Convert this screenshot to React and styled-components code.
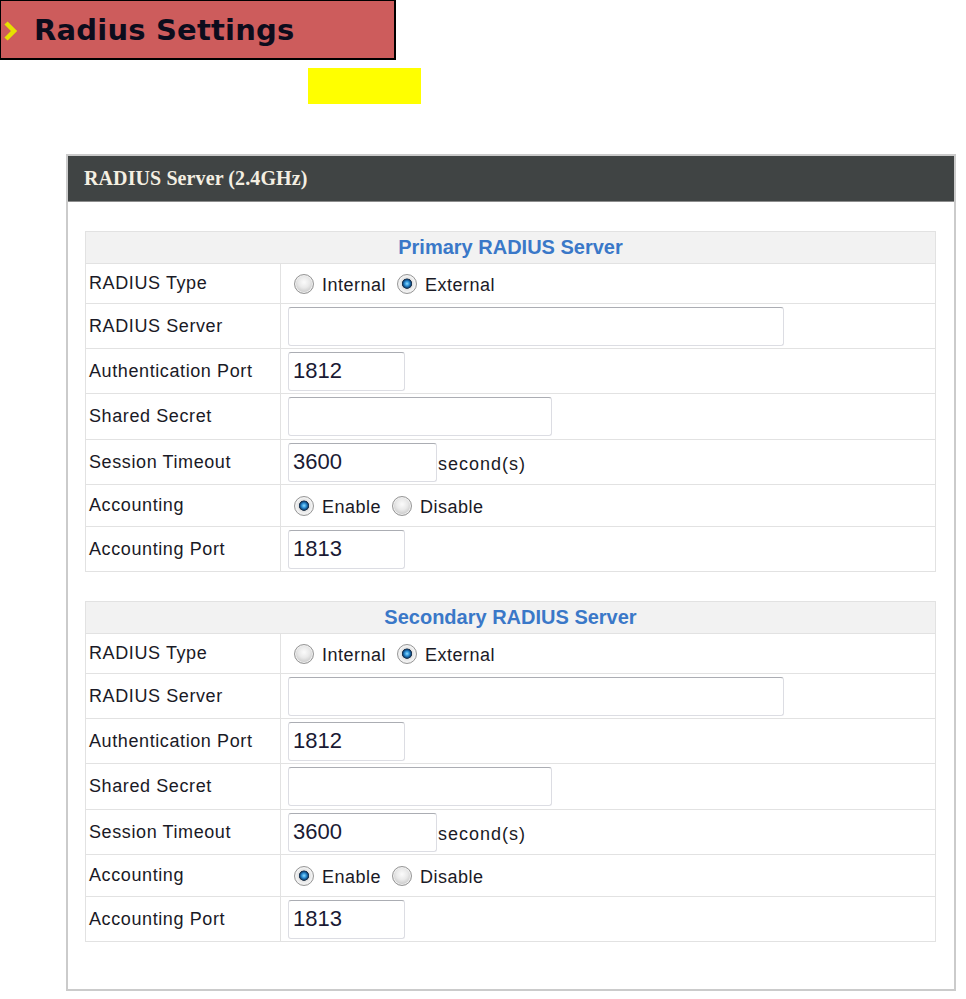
import React from "react";
import styled, { createGlobalStyle } from "styled-components";

const GlobalStyle = createGlobalStyle`
  body {
    margin: 0;
    background: #fff;
    font-family: "Liberation Sans", Arial, sans-serif;
  }
`;

const servers = [
  { title: "Primary RADIUS Server", key: "primary" },
  { title: "Secondary RADIUS Server", key: "secondary" },
];

const rows = [
  { label: "RADIUS Type", h: 40, radios: ["Internal", "External"], checked: 1 },
  { label: "RADIUS Server", h: 45, w: 496, value: "" },
  { label: "Authentication Port", h: 45, w: 117, value: "1812" },
  { label: "Shared Secret", h: 46, w: 264, value: "" },
  { label: "Session Timeout", h: 45, w: 149, value: "3600", suffix: "second(s)" },
  { label: "Accounting", h: 42, radios: ["Enable", "Disable"], checked: 0 },
  { label: "Accounting Port", h: 45, w: 117, value: "1813" },
];

const App = () => {
  return (
    <Page>
      <GlobalStyle />
      <TitleBar>
        <svg width="15" height="22" viewBox="0 0 15 22">
          <polyline
            points="3,3 11,11 3,19"
            fill="none"
            stroke="#e6e000"
            strokeWidth="4.5"
          />
        </svg>
        <TitleText>Radius Settings</TitleText>
      </TitleBar>
      <Highlight />

      <Panel>
        <PanelHeader>RADIUS Server (2.4GHz)</PanelHeader>
        <PanelBody>
          {servers.map((server) => (
            <Table key={server.key}>
              <SectionHead>{server.title}</SectionHead>
              {rows.map((row) => (
                <Row key={row.label} h={row.h}>
                  <Label>{row.label}</Label>
                  <Value>
                    {row.radios ? (
                      <RadioGroup>
                        {row.radios.map((opt, i) => (
                          <RadioLabel key={opt}>
                            <Radio
                              type="radio"
                              name={server.key + row.label}
                              defaultChecked={i === row.checked}
                            />
                            {opt}
                          </RadioLabel>
                        ))}
                      </RadioGroup>
                    ) : (
                      <>
                        <TextBox w={row.w} defaultValue={row.value} />
                        {row.suffix && <Suffix>{row.suffix}</Suffix>}
                      </>
                    )}
                  </Value>
                </Row>
              ))}
            </Table>
          ))}
        </PanelBody>
      </Panel>
    </Page>
  );
};

const Page = styled.div`
  width: 966px;
  padding-bottom: 9px;
`;

const TitleBar = styled.div`
  width: 396px;
  height: 60px;
  box-sizing: border-box;
  background-color: #cd5c5c;
  border: 2px solid #000;
  border-top-width: 1px;
  border-left-width: 1px;
  display: flex;
  align-items: center;
  padding: 2px 0 0 2px;
  gap: 16px;

  & svg {
    flex: none;
  }
`;

const TitleText = styled.div`
  font-family: "DejaVu Sans", Verdana, sans-serif;
  font-weight: bold;
  font-size: 29px;
  color: #0c0c1c;
  letter-spacing: 0.2px;
  line-height: 1;
`;

const Highlight = styled.div`
  width: 113px;
  height: 36px;
  margin: 8px 0 0 308px;
  background-color: #ffff00;
`;

const Panel = styled.div`
  width: 890px;
  margin: 50px 0 0 66px;
  box-sizing: border-box;
  border: 2px solid #cbcbcb;
`;

const PanelHeader = styled.div`
  height: 45px;
  background-color: #404444;
  border-bottom: 1px solid #8c8c8c;
  color: #f4efe2;
  font-family: "Liberation Serif", "Times New Roman", serif;
  font-weight: bold;
  font-size: 20px;
  letter-spacing: 0.1px;
  line-height: 45px;
  padding-left: 16px;
`;

const PanelBody = styled.div`
  padding: 29px 18px 47px 17px;
  display: flex;
  flex-direction: column;
  gap: 29px;
`;

const Table = styled.div`
  border: 1px solid #e2e2e2;
  width: 851px;
  box-sizing: border-box;
`;

const SectionHead = styled.div`
  height: 31px;
  background-color: #f2f2f2;
  color: #3a78c8;
  font-weight: bold;
  font-size: 20px;
  text-align: center;
  line-height: 31px;
`;

const Row = styled.div`
  display: flex;
  height: ${(p) => p.h}px;
  box-sizing: border-box;
  border-top: 1px solid #e2e2e2;
`;

const Label = styled.div`
  width: 195px;
  box-sizing: border-box;
  border-right: 1px solid #e2e2e2;
  padding-left: 3px;
  display: flex;
  align-items: center;
  font-size: 18px;
  letter-spacing: 0.6px;
  color: #1a1a26;
`;

const Value = styled.div`
  flex: 1;
  display: flex;
  align-items: center;
  padding-left: 7px;
`;

const RadioGroup = styled.div`
  display: flex;
  align-items: center;
  gap: 11px;
  padding-left: 6px;
`;

const RadioLabel = styled.label`
  display: flex;
  align-items: center;
  gap: 8px;
  font-size: 18px;
  letter-spacing: 0.5px;
  color: #1a1a26;
  padding-top: 3px;
`;

const Radio = styled.input`
  appearance: none;
  margin: -3px 0 0 0;
  width: 20px;
  height: 20px;
  border-radius: 50%;
  border: 1px solid #979797;
  box-sizing: border-box;
  background: radial-gradient(
    circle at 50% 40%,
    #fbfbfb 0%,
    #e9e9e9 40%,
    #c6c6c6 78%,
    #d8d8d8 100%
  );
  box-shadow: inset 0 0 0 1px #f2f2f2;

  &:checked {
    background: radial-gradient(
      circle at 50% 48%,
      #8fdcff 0%,
      #2a8fd6 18%,
      #0f3e6e 33%,
      #1b2f45 37%,
      #e2e2e2 42%,
      #f2f2f2 60%,
      #c8c8c8 100%
    );
  }
`;

const TextBox = styled.input`
  width: ${(p) => p.w}px;
  height: 39px;
  box-sizing: border-box;
  border: 1px solid #dcdde3;
  border-top-color: #abadb3;
  border-radius: 3px;
  padding: 0 4px;
  font-family: "Liberation Sans", Arial, sans-serif;
  font-size: 22px;
  color: #1a1a34;
  background: #fff;
  outline: none;
`;

const Suffix = styled.span`
  font-size: 18px;
  letter-spacing: 1px;
  color: #1a1a26;
  margin-left: 1px;
  padding-top: 4px;
`;

export default App;
